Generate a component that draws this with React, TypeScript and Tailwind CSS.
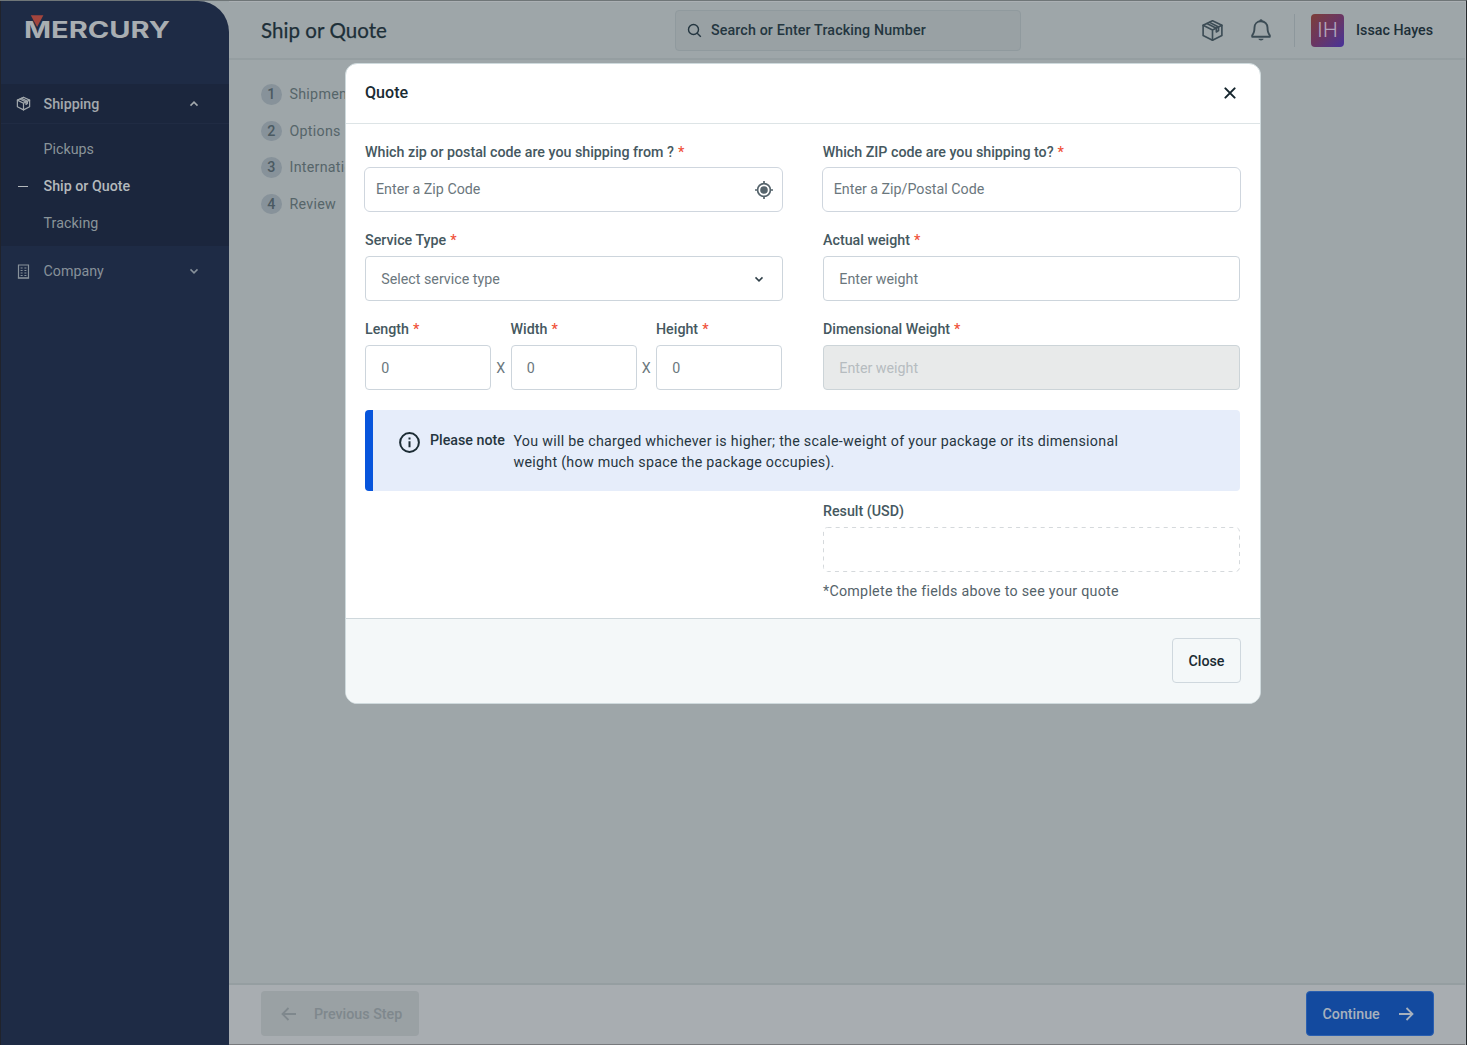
import React from 'react';

function PackageIcon({ size, width = 2 }: { size: number; width?: number }) {
  return (
    <svg width={size} height={size} viewBox="0 0 24 24" fill="none" stroke="currentColor" strokeWidth={width} strokeLinejoin="round" strokeLinecap="round">
      <path d="M12 1.900 21.800 6.600v10.600L12 22.200l-9.800-5V6.600Z" />
      <path d="m2.200 6.600 9.800 4.900 9.800-4.900M12 11.500v10.700" />
      <path d="m6.200 4.800 9.800 4.900v3.900l2.300-1.500V8.300L9 3.500" />
    </svg>
  );
}

function BellIcon() {
  return (
    <svg width="22" height="24" viewBox="0 0 22 24" fill="none" stroke="currentColor" strokeWidth="1.900" strokeLinejoin="round" strokeLinecap="round">
      <path d="M11 3.200c-3.900 0-6.500 2.800-6.500 6.400 0 4-.5 5.800-2.300 7.700v1.500h17.600v-1.500c-1.800-1.900-2.300-3.700-2.300-7.700 0-3.600-2.600-6.400-6.500-6.400Z" />
      <path d="M10.300 2.600c.2-.4 1.200-.4 1.400 0" />
      <path d="M8.400 20.700h5.200c-.3 1.100-1.300 1.700-2.600 1.700s-2.300-.6-2.600-1.700Z" fill="currentColor" stroke="none" />
    </svg>
  );
}

function Chevron({ up }: { up?: boolean }) {
  return (
    <svg width="10" height="10" viewBox="0 0 10 10" fill="none" stroke="currentColor" strokeWidth="1.500" className={up ? 'rotate-180' : ''}>
      <path d="m1.500 3.400 3.500 3.500 3.500-3.500" />
    </svg>
  );
}

function Arrow({ left }: { left?: boolean }) {
  return (
    <svg width="16" height="16" viewBox="0 0 16 16" fill="none" stroke="currentColor" strokeWidth="1.800" className={left ? 'rotate-180' : ''}>
      <path d="M1 8h13M8.500 2l6 6-6 6" />
    </svg>
  );
}

function Logo() {
  return (
    <svg width="150" height="28" viewBox="0 0 150 28" className="block">
      <text x="0" y="24" fill="#a9aeb2" fontFamily="Inter, sans-serif" fontWeight="700" fontSize="22.300" textLength="146" lengthAdjust="spacingAndGlyphs">MERCURY</text>
      <path d="M6.800 1.200h12.600l-6.300 11.800Z" fill="#a3453d" />
    </svg>
  );
}

function Sidebar() {
  return (
    <aside className="flex w-[229px] shrink-0 flex-col rounded-tr-[31px] border-l border-[#20232c] bg-[#1e2b45]">
      <div className="h-[83px] pt-[13px] pl-[23px]">
        <Logo />
      </div>
      <div className="h-[162px] bg-[#1b263d] text-[#8a9499]">
        <div className="flex h-10 items-center border-b border-[#202b43] pr-[30px] pl-[14.500px] font-medium text-[#a3a9ad]">
          <PackageIcon size={15} width={1.9} />
          <span className="ml-[13px] flex-1">Shipping</span>
          <Chevron up />
        </div>
        <div className="flex flex-col pt-[7px]">
          <div className="flex h-[36.700px] items-center pl-[42.500px]">Pickups</div>
          <div className="flex h-[36.700px] items-center pl-[17px] font-medium text-[#b4b9bc]">
            <span className="mr-[15.500px] h-px w-2.5 bg-current" />
            Ship or Quote
          </div>
          <div className="flex h-[36.700px] items-center pl-[42.500px] tracking-[0.080px]">Tracking</div>
        </div>
      </div>
      <div className="flex h-[50px] items-center pr-[30px] pl-[15.500px] text-[#87919a]">
        <svg width="13" height="15" viewBox="0 0 13 15" fill="none" stroke="currentColor" strokeWidth="1.200">
          <path d="M1.500 1h10v13h-10Z" />
          <path d="M0.900 14h11.200" />
          <path d="M3.600 4h2M7.400 4h2M3.600 6.500h2M7.400 6.500h2M3.600 9h2M7.400 9h2M3.600 11.500h2M7.400 11.500h2" />
        </svg>
        <span className="ml-[14px] flex-1">Company</span>
        <Chevron />
      </div>
    </aside>
  );
}

function TopBar() {
  return (
    <header className="flex h-[58px] items-center border-b-2 border-[#959ea1] pr-[32px] pl-[32px]">
      <h1 className="w-[413.500px] font-[Lato] text-[20.500px] leading-none tracking-[0.060px] text-[#1d2f38] [-webkit-text-stroke:0.25px_#1d2f38]">Ship or Quote</h1>
      <div className="flex h-[41px] w-[346px] items-center rounded-[4px] border border-[#909a9e] bg-[#99a1a4] pl-[11.500px] font-medium text-[#243640]">
        <svg width="15" height="15" viewBox="0 0 15 15" fill="none" stroke="currentColor" strokeWidth="1.400">
          <circle cx="6.500" cy="6.500" r="5" />
          <path d="m10.200 10.200 3.600 3.600" />
        </svg>
        <span className="ml-[9px] tracking-[0.130px]">Search or Enter Tracking Number</span>
      </div>
      <div className="ml-auto flex items-center text-[#3c4c55]">
        <PackageIcon size={23} width={1.7} />
        <div className="ml-[26px]">
          <BellIcon />
        </div>
        <div className="ml-[22px] h-[33px] w-px bg-[#8d979c]" />
        <div className="ml-4 flex size-[33px] items-center justify-center rounded-[4px] bg-linear-to-br from-[#7d3d36] via-[#6a3562] to-[#47309a] font-[Inter] text-[20.500px] leading-none font-light text-[#b0a3bb]">IH</div>
        <span className="ml-3 font-medium text-[#1d2f38]">Issac Hayes</span>
      </div>
    </header>
  );
}

const steps = ['Shipment', 'Options', 'International', 'Review'];

function Steps() {
  return (
    <ol className="flex w-[200px] flex-1 flex-col pt-4 pl-[32px] text-[#566569]">
      {steps.map((s, i) => (
        <li key={s} className="flex h-[36.600px] items-center tracking-[0.280px]">
          <span className="mr-2 flex size-[20.500px] items-center justify-center rounded-full bg-[#87929a] font-medium tracking-normal text-[#4b5a62]">{i + 1}</span>
          {s}
        </li>
      ))}
    </ol>
  );
}

function BottomBar() {
  return (
    <footer className="flex h-[62px] items-center justify-between border-t-2 border-b border-t-[#959ea1] border-b-[#77797c] bg-[#a8adb1] pr-[31px] pb-0.5 pl-[32px] font-medium">
      <button className="flex h-[45px] w-[158px] items-center rounded-[4px] bg-[#9aa1a4] pl-5 text-[#7f888d]">
        <Arrow left />
        <span className="ml-[17px]">Previous Step</span>
      </button>
      <button className="flex h-[45px] w-[128px] items-center rounded-[4px] border border-[#2a5fb0] bg-[#134a9f] pl-[15.500px] text-[#a8b1bd]">
        <span>Continue</span>
        <span className="ml-[18px]">
          <Arrow />
        </span>
      </button>
    </footer>
  );
}

function Label({ children, required = true }: { children: React.ReactNode; required?: boolean }) {
  return (
    <div className="flex h-5 items-center gap-1 font-medium whitespace-nowrap text-[#455860]">
      {children}
      {required && <span className="text-[#f0523a]">*</span>}
    </div>
  );
}

function Field({ label, placeholder, className = '' }: { label: string; placeholder: string; className?: string }) {
  return (
    <div className={className}>
      <Label>{label}</Label>
      <div className="mt-1.5 flex h-[45px] items-center rounded-[4px] border border-[#cdd5dc] pl-[15.300px]">{placeholder}</div>
    </div>
  );
}

function QuoteDialog() {
  return (
    <section className="absolute top-[62px] left-[345px] flex h-[640.500px] w-[915.500px] flex-col overflow-hidden rounded-[12px] border border-[#cfdadd] bg-white text-[#6b777d]">
      <div className="flex h-[60px] items-center justify-between border-b border-[#dde4e6] pr-6 pb-0.5 pl-[19px]">
        <h2 className="text-[16.100px] font-medium text-[#1a2b33]">Quote</h2>
        <svg width="12" height="12" viewBox="0 0 12 12" fill="none" stroke="#14242c" strokeWidth="2" strokeLinecap="round">
          <path d="m1.400 1.400 9.200 9.200M10.600 1.400l-9.200 9.200" />
        </svg>
      </div>

      <div className="flex flex-1 flex-col px-[19px] pt-[18px]">
        <div className="flex gap-10">
          <div className="w-[418px]">
            <Label>Which zip or postal code are you shipping from ?</Label>
            <div className="-mx-px mt-[5px] flex h-[45px] w-[419px] items-center justify-between rounded-[6px] border border-[#cfd6de] pr-2 pb-px pl-[11px]">
              Enter a Zip Code
              <svg width="20" height="20" viewBox="0 0 20 20" fill="none" stroke="#56646c" strokeWidth="1.700" className="mt-px">
                <circle cx="10" cy="10" r="6.400" />
                <circle cx="10" cy="10" r="3.800" fill="#56646c" stroke="none" />
                <path d="M10 1v3M10 16v3M1 10h3M16 10h3" />
              </svg>
            </div>
          </div>
          <div className="w-[418px]">
            <Label>Which ZIP code are you shipping to?</Label>
            <div className="-mx-px mt-[5px] flex h-[45px] w-[419px] items-center rounded-[6px] border border-[#cfd6de] pb-px pl-[11px]">Enter a Zip/Postal Code</div>
          </div>
        </div>

        <div className="mt-[18px] flex gap-10">
          <div className="w-[418px]">
            <Label>Service Type</Label>
            <div className="mt-1.5 flex h-[45px] items-center justify-between rounded-[4px] border border-[#cdd5dc] pr-[18.500px] pl-[15.300px]">
              Select service type
              <span className="text-[#2f3f48]">
                <Chevron />
              </span>
            </div>
          </div>
          <Field label="Actual weight" placeholder="Enter weight" className="w-[417px]" />
        </div>

        <div className="mt-[18px] flex gap-10">
          <div className="flex w-[418px]">
            <Field label="Length" placeholder="0" className="w-[126px]" />
            <span className="mt-[39px] w-[19.500px] text-center">X</span>
            <Field label="Width" placeholder="0" className="w-[126px]" />
            <span className="mt-[39px] w-[19.500px] text-center">X</span>
            <Field label="Height" placeholder="0" className="w-[126px]" />
          </div>
          <div className="w-[417px]">
            <Label>Dimensional Weight</Label>
            <div className="mt-1.5 flex h-[45px] items-center rounded-[4px] border border-[#ccd4d8] bg-[#e8eaea] pl-[15.300px] text-[#b6bcc0]">Enter weight</div>
          </div>
        </div>

        <div className="mt-5 flex h-[80.500px] w-[875px] rounded-[4px] border-l-8 border-[#0755dc] bg-[#e6edfa] pt-5 pl-[26px] text-[#26363f]">
          <svg width="21" height="21" viewBox="0 0 21 21" fill="none" stroke="#1c2c34" strokeWidth="2" className="mt-[2px]">
            <circle cx="10.500" cy="10.500" r="9.400" />
            <path d="M10.500 9.200v6M10.500 5.500v2" />
          </svg>
          <span className="ml-2.5 font-medium">Please note</span>
          <p className="mt-px ml-[8.500px] w-[630px] leading-[20.600px] tracking-[0.280px]">
            You will be charged whichever is higher; the scale-weight of your package or its dimensional weight (how much space the package occupies).
          </p>
        </div>

        <div className="mt-[10.500px] ml-[458px] w-[417px]">
          <Label required={false}>Result (USD)</Label>
          <svg width="417" height="45" viewBox="0 0 417 45" fill="none" className="mt-1.5">
            <rect x="0.500" y="0.500" width="416" height="44" rx="4" stroke="#d5d9dc" strokeDasharray="4 4.200" />
          </svg>
          <p className="mt-[9px] tracking-[0.270px] text-[#55636a]">*Complete the fields above to see your quote</p>
        </div>
      </div>

      <div className="flex h-[85px] shrink-0 items-center justify-end border-t border-[#cfd8dc] bg-[#f4f8f9] pr-[18.500px]">
        <button className="h-[45px] w-[69px] rounded-[4px] border border-[#cfd8de] font-medium text-[#1a2b33]">Close</button>
      </div>
    </section>
  );
}

export default function App() {
  return (
    <div className="relative flex h-[1045px] w-[1467px] overflow-hidden border-t border-r border-t-[#6f7678] border-r-[#24292c] bg-[#9ea6a9] font-[Roboto,sans-serif] text-[14.250px] leading-5">
      <Sidebar />
      <main className="flex min-w-0 flex-1 flex-col border-t border-r border-[#abb0b4]">
        <TopBar />
        <Steps />
        <BottomBar />
      </main>
      <QuoteDialog />
    </div>
  );
}
